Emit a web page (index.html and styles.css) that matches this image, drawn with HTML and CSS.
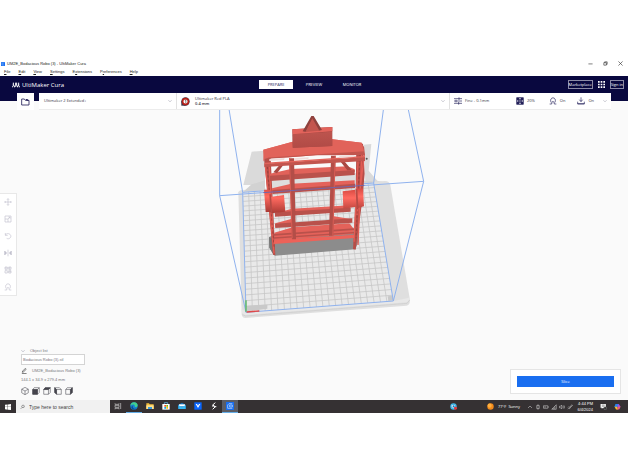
FILE: index.html
```html
<!DOCTYPE html>
<html lang="en">
<head>
<meta charset="utf-8">
<title>UM2E_Bodacious Robo (3) - UltiMaker Cura</title>
<link rel="stylesheet" href="styles.css">
</head>
<body>
<div class="window">
  <div class="titlebar">
    <svg class="app-icon" viewBox="0 0 8 8"><rect width="8" height="8" rx="1" fill="#196ef0"/><path d="M6 2H2v4h4" fill="none" stroke="#8fc0ff"/></svg>
    <span class="title">UM2E_Bodacious Robo (3) - UltiMaker Cura</span>
    <div class="window-buttons">
      <button aria-label="Minimize"><svg viewBox="0 0 12 12"><path d="M1 7h10"/></svg></button>
      <button aria-label="Restore"><svg viewBox="0 0 12 12"><path d="M2 4h6v6H2zM4 4V2h6v6H8"/></svg></button>
      <button aria-label="Close"><svg viewBox="0 0 12 12"><path d="M1 1l10 10M11 1L1 11"/></svg></button>
    </div>
  </div>
  <nav class="menu">
    <a href="#"><u>F</u>ile</a><a href="#"><u>E</u>dit</a><a href="#"><u>V</u>iew</a><a href="#"><u>S</u>ettings</a><a href="#">E<u>x</u>tensions</a><a href="#">P<u>r</u>eferences</a><a href="#"><u>H</u>elp</a>
  </nav>
  <header class="header">
    <div class="brand">
      <svg viewBox="0 0 24 18"><path d="M4 2v8l-3 6M11 2v8l-3 6M14 2v8l3 6M20 2v8l3 6M4 8l5 7M20 8l-4 7" fill="none" stroke="#fff" stroke-width="3"/></svg>
      <span>UltiMaker Cura</span>
    </div>
    <div class="stages">
      <button class="stage active">PREPARE</button><button class="stage">PREVIEW</button><button class="stage">MONITOR</button>
    </div>
    <div class="account">
      <button class="outlined">Marketplace</button>
      <button class="apps" aria-label="Apps"><svg viewBox="0 0 21 21" fill="#fff"><path d="M0 0h5v5H0zM8 0h5v5H8zM16 0h5v5h-5zM0 8h5v5H0zM8 8h5v5H8zM16 8h5v5h-5zM0 16h5v5H0zM8 16h5v5H8zM16 16h5v5h-5z"/></svg></button>
      <button class="outlined">Sign in</button>
    </div>
  </header>
  <div class="config">
    <button class="open" aria-label="Open file"><svg viewBox="0 0 27 24"><path d="M2 3h8l3 4h11v14H2z" fill="none" stroke="#24215a" stroke-width="2.5"/><path d="M14 3h5l5 5h-7z" fill="#24215a"/></svg></button>
    <div class="selectors">
      <button class="machine"><span>Ultimaker 2 Extended+</span><svg class="chevron" viewBox="0 0 10 10"><path d="M1 3l4 4 4-4"/></svg></button>
      <button class="material">
        <svg class="spool" viewBox="0 0 28 28"><path d="M1 27V13h13v14z" fill="#353347"/><circle cx="14" cy="14" r="13" fill="#403649"/><circle cx="14" cy="14" r="9" fill="#fff" stroke="#b82018" stroke-width="5"/><path d="M12 11l3-2v10" fill="none" stroke="#333" stroke-width="2"/></svg>
        <span class="material-name">Ultimaker Red PLA<b>0.4 mm</b></span>
        <svg class="chevron" viewBox="0 0 10 10"><path d="M1 3l4 4 4-4"/></svg>
      </button>
      <button class="settings">
        <svg viewBox="0 0 24 24"><path d="M0 5h24M0 12h24M0 19h24M15 1v8M6 8v8M14 15v8"/></svg><span class="profile">Fine - 0.1mm</span>
        <svg viewBox="0 0 24 24"><path fill="#24215a" d="M2 2h20v20H2z"/><path fill="#fff" stroke="none" d="M9 4h6l-3 4zM9 20h6l-3-4zM4 9v6l4-3zM20 9v6l-4-3zM12 10l2 2-2 2-2-2z"/></svg><span class="infill">20%</span>
        <svg viewBox="0 0 24 24"><path d="M6 16c-7-18 19-18 12 0M2 21h6l1-6c3-4 5 0 6 0l1 6h6"/></svg><span class="support">On</span>
        <svg viewBox="0 0 24 24"><path d="M12 1v12M7 8l5 6 5-6M2 14v7h20v-7M2 20h20"/></svg><span class="adhesion">On</span>
        <svg class="chevron" viewBox="0 0 10 10"><path d="M1 3l4 4 4-4"/></svg>
      </button>
    </div>
  </div>
  <main class="viewport">
    <svg class="scene" viewBox="-630 15 1884 870" role="img" aria-label="Build plate with model">
      <defs>
        <linearGradient id="drum" x1="0" y1="0" x2="0" y2="1"><stop offset="0" stop-color="#d94a42"/><stop offset=".35" stop-color="#ff6a60"/><stop offset="1" stop-color="#a93a34"/></linearGradient>
        <linearGradient id="front" x1="0" y1="0" x2="0" y2="1"><stop offset="0" stop-color="#bd544e"/><stop offset="1" stop-color="#b14b46"/></linearGradient>
      </defs>
      <path fill="#dadada" d="M125 140l40-3v103H100zM460 119l24-2-8 80 26 30 36 8-70 30z"/>
      <path fill="#dedede" d="M182 222l256-18v34l-256 20z"/>
      <path fill="#dfdfdf" d="M85 262Q86 256 98 255L525 228Q538 228 541 240L600 585Q600 600 590 602L106 639Q96 639 95 628z"/>
      <path fill="#d2d2d2" d="M125 238l40-12v30l-65 4zM440 225l50 4-30 26-20 2z"/>
      <path fill="#e8e8e8" d="M95 612l13 9 443-33 46-10 2 6-8 8-485 38-10-6z"/>
      <path fill="none" stroke="#cbcbcb" stroke-width="2" d="M97 629l10 4 484-38 8-10"/>
      <path fill="#e9e9e9" d="M99 261l392-27 59 354-442 34z"/>
      <path id="plate-grid" fill="none" stroke="#c6c6c6" stroke-width="2.4"/>
      <path fill="#c9c9c9" d="M110 602l62-3v12l-62 8zM533 574l14-2 4 14-16 2z"/>
      <g fill="none" stroke="#8fb2ee" stroke-width="3">
        <path d="M29 0v272L641 229 592 0M29 272l79 350M641 229l-91 359"/>
        <path d="M55 0l43 262 10 360 442-34-59-354L522 0M98 262l393-28"/>
      </g>
      <path stroke="#58b858" stroke-width="4" d="M108 620v-34"/><path stroke="#e04848" stroke-width="4" d="M110 621l38-3"/>

      <path fill="#8c8c8c" d="M177 396l16-7 247-18 6 36-10 26-242 19-16-24z"/>
      <path fill="#777" d="M177 396l14 8v46l-13-22z"/>
      <path fill="#b64e48" d="M162 160l20-2 14 293-7-2zM439 116l20 0 5 90-7 80-20 148-8-2 8-150z"/>
      <path fill="none" stroke="#e25d54" stroke-width="4" d="M166 180l26 265M178 185l11 190M456 130l-12 290M444 170l-12 240M463 150l-22 180"/>
      <path fill="none" stroke="#8f3a36" stroke-width="2" stroke-dasharray="7 6" d="M172 185l20 240M450 150l-12 250"/>

      <path fill="#e4625a" d="M186 250l58-14 190-10v14l-248 22zM196 325l50-14 174-10v12l-224 20zM196 355l50-14v16l-50 10zM372 308l48 9-48 4zM372 334l50 8-50 5zM193 383l55-16 170-12 14 18-3 14-236 20z"/>
      <path fill="#b9514b" d="M187 255l248-19v13l-248 18zM195 322l227-14v12l-227 15zM195 356l232-16v13l-231 16zM192 387l240-17v5l-240 17zM192 397l240-16v4l-240 16z"/>
      <path fill="#ed6259" d="M192 406l240-17v10l-240 18z"/>
      <path fill="#e1625a" d="M180 206l62-14 170-8 22 9v8l-254 14z"/>
      <path fill="#ba524c" d="M180 212l254-17v15l-254 18z"/>
      <path fill="#a94842" d="M190 202l22-26 15-5-26 34zM390 168l13 1 22 26-13 1z"/>
      <path fill="#b34e48" d="M237 160h15l6 243h-12zM363 152h14l-7 240h-13z"/>
      <path fill="#d95d55" d="M237 160h3l8 240h-3zM374 152h3l-7 240h-3z"/>
      <path fill="#e1635a" d="M160 134l88-24 119-7 88 10 9 37-94-4-130 11-75 3-5 10z"/>
      <path fill="#c2554e" d="M163 147l140-8 159-15 3 26-147 1-140 10zM163 176l302-20v12l-302 18z"/>
      <path fill="#e1635a" d="M160 134l88-24 119-7 88 10 7 26-299 19zM164 173l297-20 4 4-302 21z"/>
      <path fill="#f1dcda" d="M178 162l46-3-2 6-44 3zM252 160l44-3-1 5-43 3zM388 153l45-3-2 6-43 3z"/>
      <path fill="#9f4540" d="M247 73l120-7v57l-119 5z"/>
      <path fill="url(#front)" d="M248 88l118-8v43l-117 5z"/>
      <path fill="#e3635b" d="M247 73l120-7v13l-119 9z"/>
      <path fill="#8f413d" d="M304 33h7l25 42-10 2-20-30-18 34-10-2z"/>
      <path fill="#c3554e" d="M307 40l21 37-42 4z"/>
      <circle cx="470" cy="161" r="3" fill="#555"/>

      <path fill="url(#drum)" d="M162 254l19 0 4 67-18 0zM438 252l21-2 3 54-21 6z"/>
      <path fill="url(#drum)" d="M180 276l42-6 4 50-42 5zM398 259l38-5 4 51-40 6z"/>
      <path fill="#b44b45" d="M178 268l5 0 4 57-5 0zM437 253l5 0 3 55-5 1z"/>
      <path stroke="#7565a7" stroke-width="3" d="M160 263l303-22"/>
    </svg>

    <div class="tools">
      <button aria-label="Move"><svg viewBox="0 0 24 24"><path d="M12 2v20M2 12h20M9 5l3-3 3 3M9 19l3 3 3-3M5 9l-3 3 3 3M19 9l3 3-3 3"/></svg></button>
      <button aria-label="Scale"><svg viewBox="0 0 24 24"><path d="M3 3h18v18H3zM3 12h9v9M12 12l6-6M13 6h5v5"/></svg></button>
      <button aria-label="Rotate"><svg viewBox="0 0 24 24"><path d="M4 3v7h7M4 9c8-10 21 0 15 8-3 4-8 4-11 2"/></svg></button>
      <button aria-label="Mirror"><svg viewBox="0 0 24 24"><path d="M12 2v20"/><path d="M2 6l6 6-6 6zM22 6l-6 6 6 6z" fill="#c2c1cf"/></svg></button>
      <button aria-label="Per model settings"><svg viewBox="0 0 24 24"><path d="M3 3h7v7H3zM14 3h7v7h-7zM3 14h7v7H3zM14 14h7v7h-7zM3 6h7M17 3v7M14 17h7"/></svg></button>
      <button aria-label="Support blocker"><svg viewBox="0 0 24 24"><path d="M6 16c-7-18 19-18 12 0M2 21h6l1-6c3-4 5 0 6 0l1 6h6"/></svg></button>
    </div>

    <section class="objects">
      <button class="list-toggle"><svg class="chevron" viewBox="0 0 10 10"><path d="M1 3l4 4 4-4"/></svg><span>Object list</span></button>
      <button class="item">Bodacious Robo (3).stl</button>
      <button class="rename"><svg viewBox="0 0 14 14"><path d="M2 13h11M3 10l1-3 6-6 2 2-6 6z" fill="none" stroke="#333" stroke-width="1.5"/></svg><span>UM2E_Bodacious Robo (3)</span></button>
      <p class="size">144.1 x 34.9 x 279.4 mm</p>
      <div class="views">
        <button aria-label="3D view"><svg viewBox="0 0 22 22"><path d="M11 1l9 5v10l-9 5-9-5V6zM2 6l9 5 9-5M11 11v10"/></svg></button>
        <button aria-label="Front view"><svg viewBox="0 0 22 22"><path d="M2 7l4-5h14v13l-5 5H2zM2 7h13l5-5M15 7v13"/><path class="solid" d="M2 7h13v13H2z"/></svg></button>
        <button aria-label="Top view"><svg viewBox="0 0 22 22"><path d="M2 7l4-5h14v13l-5 5H2zM2 7h13l5-5M15 7v13"/><path class="solid" d="M2 7l4-5h14l-5 5z"/></svg></button>
        <button aria-label="Left view"><svg viewBox="0 0 22 22"><path d="M7 7h13v13H7L2 15V2h13l5 5M2 2l5 5v13"/><path class="solid" d="M2 2l5 5v13l-5-5z"/></svg></button>
        <button aria-label="Right view"><svg viewBox="0 0 22 22"><path d="M2 7l4-5h14v13l-5 5H2zM2 7h13l5-5M15 7v13"/><path class="solid" d="M15 7l5-5v13l-5 5z"/></svg></button>
      </div>
    </section>

    <div class="action"><button class="slice">Slice</button></div>
  </main>
  <footer class="taskbar">
    <button class="start" aria-label="Start"><svg viewBox="0 0 16 16" fill="#fff"><path d="M0 2l7-1v6H0zM8 1l8-1v7H8zM0 8h7v7l-7-1zM8 8h8v8l-8-1z"/></svg></button>
    <label class="search"><svg viewBox="0 0 16 16"><path d="M2 14l5-5M7 9a4 4 0 1 1 3 1 4 4 0 0 1-3-1z" fill="none" stroke="#333" stroke-width="1.5"/></svg><input type="text" placeholder="Type here to search"></label>
    <div class="pinned">
      <button aria-label="Task view"><svg viewBox="0 0 24 24"><path d="M3 4v3h12V4M3 10h12v6H3zM3 22v-3h12v3M20 3v18" fill="none" stroke="#ccc" stroke-width="2"/></svg></button>
      <button class="running" aria-label="Edge"><svg viewBox="0 0 24 24"><circle cx="12" cy="12" r="11" fill="#1683cf"/><path d="M1 11C3-3 22-2 23 10c0 7-9 6-9 3 2-5-7-8-13-2z" fill="#42d08c"/><path d="M8 13c0 8 8 9 13 6-5 6-16 5-17-3 0-3 3-5 6-5z" fill="#0c4b91"/></svg></button>
      <button aria-label="File Explorer"><svg viewBox="0 0 24 24"><path d="M1 4h8l2 3h12v14H1z" fill="#f2bd3d"/><path d="M1 10h22v11H1z" fill="#ffe08c"/><path d="M6 15h12v6H6z" fill="#3b98dc"/></svg></button>
      <button aria-label="Store"><svg viewBox="0 0 24 24"><path d="M7 7V2h10v5" fill="none" stroke="#6bc5f7" stroke-width="2"/><path d="M1 6h22v17H1z" fill="#fff"/><path d="M7 9h5v5H7z" fill="#f25022"/><path d="M13 9h5v5h-5z" fill="#7fba00"/><path d="M7 15h5v5H7z" fill="#00a4ef"/><path d="M13 15h5v5h-5z" fill="#ffb900"/></svg></button>
      <button aria-label="Mail"><svg viewBox="0 0 24 24"><path d="M1 8l11-6 11 6v13H1z" fill="#1271bd"/><path d="M3 7h18v6H3z" fill="#fff"/><path d="M1 9l11 7 11-7v12H1z" fill="#37b7f4"/></svg></button>
      <button aria-label="Vault"><svg viewBox="0 0 24 24"><path d="M1 1h22v22H1z" fill="#0866ff"/><path d="M5 6h4l3 5 3-5h4l-7 12z" fill="#fff"/></svg></button>
      <button aria-label="Notes"><svg viewBox="0 0 24 24"><path d="M16 2L8 9l8 5-8 8M6 12h6M12 14h7" fill="none" stroke="#fff" stroke-width="3"/></svg></button>
      <button class="running current" aria-label="UltiMaker Cura"><svg viewBox="0 0 24 24"><path d="M0 0h24v24H0z" fill="#196ef0"/><path d="M19 5H9L5 9v10h14M11 9h8v6h-8z" fill="none" stroke="#cfe4ff" stroke-width="2"/></svg></button>
    </div>
    <div class="tray">
      <svg class="color-icon help" viewBox="0 0 24 24"><circle cx="12" cy="12" r="11" fill="#42b8e9"/><path d="M6 7h11l-5 12-6-6z" fill="#fff"/><path d="M9 8h6v7H9z" fill="#1678bd"/><circle cx="19" cy="18" r="5" fill="#e4373b"/></svg>
      <svg class="color-icon" viewBox="0 0 24 24"><circle cx="12" cy="12" r="11" fill="#f28a1c"/><circle cx="9" cy="9" r="7" fill="#ffae3d"/></svg>
      <span class="weather">77°F&nbsp; Sunny</span>
      <div class="status">
        <svg viewBox="0 0 24 24"><path d="M4 16l8-8 8 8"/></svg>
        <svg viewBox="0 0 24 24"><path d="M7 6h10v12H7zM12 1v5M12 18v5M10 12h4"/></svg>
        <svg viewBox="0 0 24 24"><path d="M2 7h17v10H2zM22 10v4M5 12h7" /></svg>
        <svg viewBox="0 0 24 24"><path d="M3 21L21 3v18zM9 16v5M15 10v11"/></svg>
        <svg viewBox="0 0 24 24"><path d="M2 9h4l5-5v16l-5-5H2zM15 8c3 3 3 5 0 8M19 5c4 5 4 9 0 14"/></svg>
        <svg viewBox="0 0 24 24"><path d="M3 20c4-5 8 2 9-4M10 15l9-12 3 3-10 10zM4 14l5-5"/></svg>
      </div>
      <time class="clock">4:44 PM<br>6/4/2024</time>
      <svg class="color-icon" viewBox="0 0 24 24"><path d="M2 3h18v13h-9l-5 4v-4H2z" fill="#fff"/><path d="M6 7h10M6 11h10" stroke="#555" stroke-width="2"/><circle cx="18" cy="18" r="5" fill="#333" stroke="#bbb"/></svg>
      <svg class="color-icon" viewBox="0 0 24 24"><path d="M5 3h9l4 8-8 3H1z" fill="#2587e8"/><path d="M14 3c5 0 5 7 9 9l-7 3-5-4z" fill="#a34de5"/><path d="M2 13h9l3 9H7z" fill="#f4bf31"/><path d="M12 14l11-2-5 10h-7z" fill="#ee5c77"/></svg>
    </div>
  </footer>
</div>
<script src="grid.js"></script>
</body>
</html>
```
FILE: styles.css
```css
* { box-sizing: border-box; }
body {
  margin: 0;
  padding-top: 59px;
  background: #fff;
  color: #35343f;
  font: 4px/6px "Open Sans", "Noto Sans", sans-serif;
}
button {
  margin: 0;
  padding: 0;
  border: 0;
  background: none;
  color: inherit;
  font: inherit;
}
svg { display: block; flex: none; }
a { color: inherit; text-decoration: none; }
p { margin: 0; }

.titlebar { display: flex; align-items: center; height: 9px; padding: 0 5px 0 1px; gap: 2px; color: #222; font-family: "Liberation Sans", sans-serif; }
.app-icon { width: 4px; height: 4px; }
.window-buttons { display: flex; gap: 10px; margin-left: auto; }
.window-buttons svg { width: 5px; height: 5px; fill: none; stroke: #333; stroke-width: 1.5; }
.menu { display: flex; gap: 8px; height: 8px; padding: 1px 4px; color: #222; font-family: "Liberation Sans", sans-serif; }

.header { display: grid; grid-template-columns: 1fr auto 1fr; align-items: center; height: 17px; padding: 0 4px; background: #09083f; color: #fff; }
.brand { display: flex; align-items: center; gap: 2px; padding-left: 8px; font-size: 6px; line-height: 8px; }
.brand svg { width: 8px; height: 6px; }
.stages { display: flex; gap: 4px; }
.stage { width: 34px; height: 9px; }
.stage.active { background: #fff; color: #24215a; }
.account { display: flex; justify-content: flex-end; align-items: center; gap: 4px; }
.outlined { height: 9px; padding: 0; border: 1px solid #8b8aa5; }
.apps { padding: 0 1px; }
.apps svg { width: 7px; height: 7px; }

.config { display: flex; gap: 5px; height: 17px; padding: 0 17px; background: linear-gradient(#09083f 8px, #fafafa 8px); }
.open { display: grid; place-items: center; width: 17px; background: #fff; }
.open svg { width: 9px; height: 8px; }
.selectors { display: grid; grid-template-columns: 137fr 273fr 162fr; flex: 1; background: #fff; border-bottom: 1px solid #ececec; }
.selectors button { display: flex; align-items: center; padding: 0 4px 0 5px; text-align: left; }
.selectors button + button { padding-left: 4px; border-left: 1px solid #e2e2e2; }
.chevron { width: 4px; height: 4px; fill: none; stroke: #77768a; stroke-width: 1; }
.selectors .chevron { margin-left: auto; }
.spool { width: 9px; height: 9px; margin-right: 5px; }
.material-name { line-height: 5px; }
.material-name b { display: block; font-weight: 600; }
.settings svg:not(.chevron) { width: 8px; height: 8px; margin-right: 3px; fill: none; stroke: #24215a; stroke-width: 2; }
.profile { flex: 49 0 0; }
.infill { flex: 21 0 0; }
.support { flex: 17 0 0; }
.adhesion { flex: 14 0 0; }

.viewport { display: grid; height: 290px; background: #fafafa; }
.viewport > * { grid-area: 1 / 1; }
.scene { width: 100%; height: 290px; }
.tools { align-self: start; justify-self: start; display: grid; gap: 9px; width: 17px; margin-top: 83px; padding: 4px; background: #fff; border: 1px solid #e8e8e8; border-left: 0; }
.tools svg { width: 8px; height: 8px; fill: none; stroke: #c2c1cf; stroke-width: 2; }
.objects { align-self: end; justify-self: start; margin: 0 0 5px 21px; color: #77767c; font-family: "Liberation Sans", sans-serif; }
.objects button { display: flex; align-items: center; }
.list-toggle { gap: 5px; height: 7px; }
.objects .item { width: 64px; height: 11px; margin-bottom: 2px; padding: 0 1px; background: #fff; border: 1px solid #d4d4d4; }
.rename { gap: 5px; height: 8px; }
.rename svg { width: 6px; height: 6px; }
.size { margin: 2px 0 4px; }
.views { display: flex; gap: 3px; }
.views svg { width: 8px; height: 8px; fill: none; stroke: #45444c; stroke-width: 1.5; }
.views .solid { fill: #45444c; }
.action { align-self: end; justify-self: end; width: 111px; margin: 0 7px 6px 0; padding: 6px; background: #fff; border: 1px solid #e5e5e5; }
.slice { display: block; width: 100%; height: 11px; background: #196ef0; color: #fff; }

.taskbar { display: flex; align-items: stretch; height: 13px; background: #353133; color: #fff; }
.start { display: grid; place-items: center; width: 16px; }
.start svg { width: 6px; height: 6px; }
.search { display: flex; align-items: center; gap: 4px; width: 94px; padding-left: 4px; background: #f1f1f1; }
.search svg { width: 5px; height: 6px; }
.search input { flex: 1; min-width: 0; padding: 0; border: 0; background: none; color: #333; font: 5px/8px "Liberation Sans", sans-serif; }
.search input::placeholder { color: #444; }
.pinned { display: flex; }
.pinned button { display: grid; place-items: center; width: 16px; border-bottom: 1px solid transparent; }
.pinned .running { border-bottom-color: #65aee8; }
.pinned .current { background: #5b5d66; }
.pinned svg { width: 8px; height: 8px; }
.tray { display: flex; align-items: center; gap: 4px; margin-left: auto; padding-right: 7px; }
.color-icon { width: 7px; height: 7px; }
.help { margin-right: 26px; }
.status { display: flex; gap: 2px; margin-left: 3px; }
.status svg { width: 6px; height: 6px; fill: none; stroke: #ddd; stroke-width: 2; }
.clock { width: 16px; font-family: "Liberation Sans", sans-serif; text-align: right; }
.clock + .color-icon { margin: 0 3px; }
```
FILE: grid.js
```js
// Draws the build plate's grid in perspective between its four corners.
const back = [[99, 261], [491, 234]];
const front = [[108, 622], [550, 588]];
const cells = 23;
const mix = (a, b, t) => [a[0] + (b[0] - a[0]) * t, a[1] + (b[1] - a[1]) * t];
const line = (a, b) => `M${a[0].toFixed(1)} ${a[1].toFixed(1)}L${b[0].toFixed(1)} ${b[1].toFixed(1)}`;
let d = "";
for (let i = 1; i < cells; i++) {
  const u = i / cells;
  d += line(mix(...back, u), mix(...front, u));
  const t = u * 393 / (u * 393 + (1 - u) * 443);
  d += line(mix(back[0], front[0], t), mix(back[1], front[1], t));
}
document.getElementById("plate-grid").setAttribute("d", d);
```
